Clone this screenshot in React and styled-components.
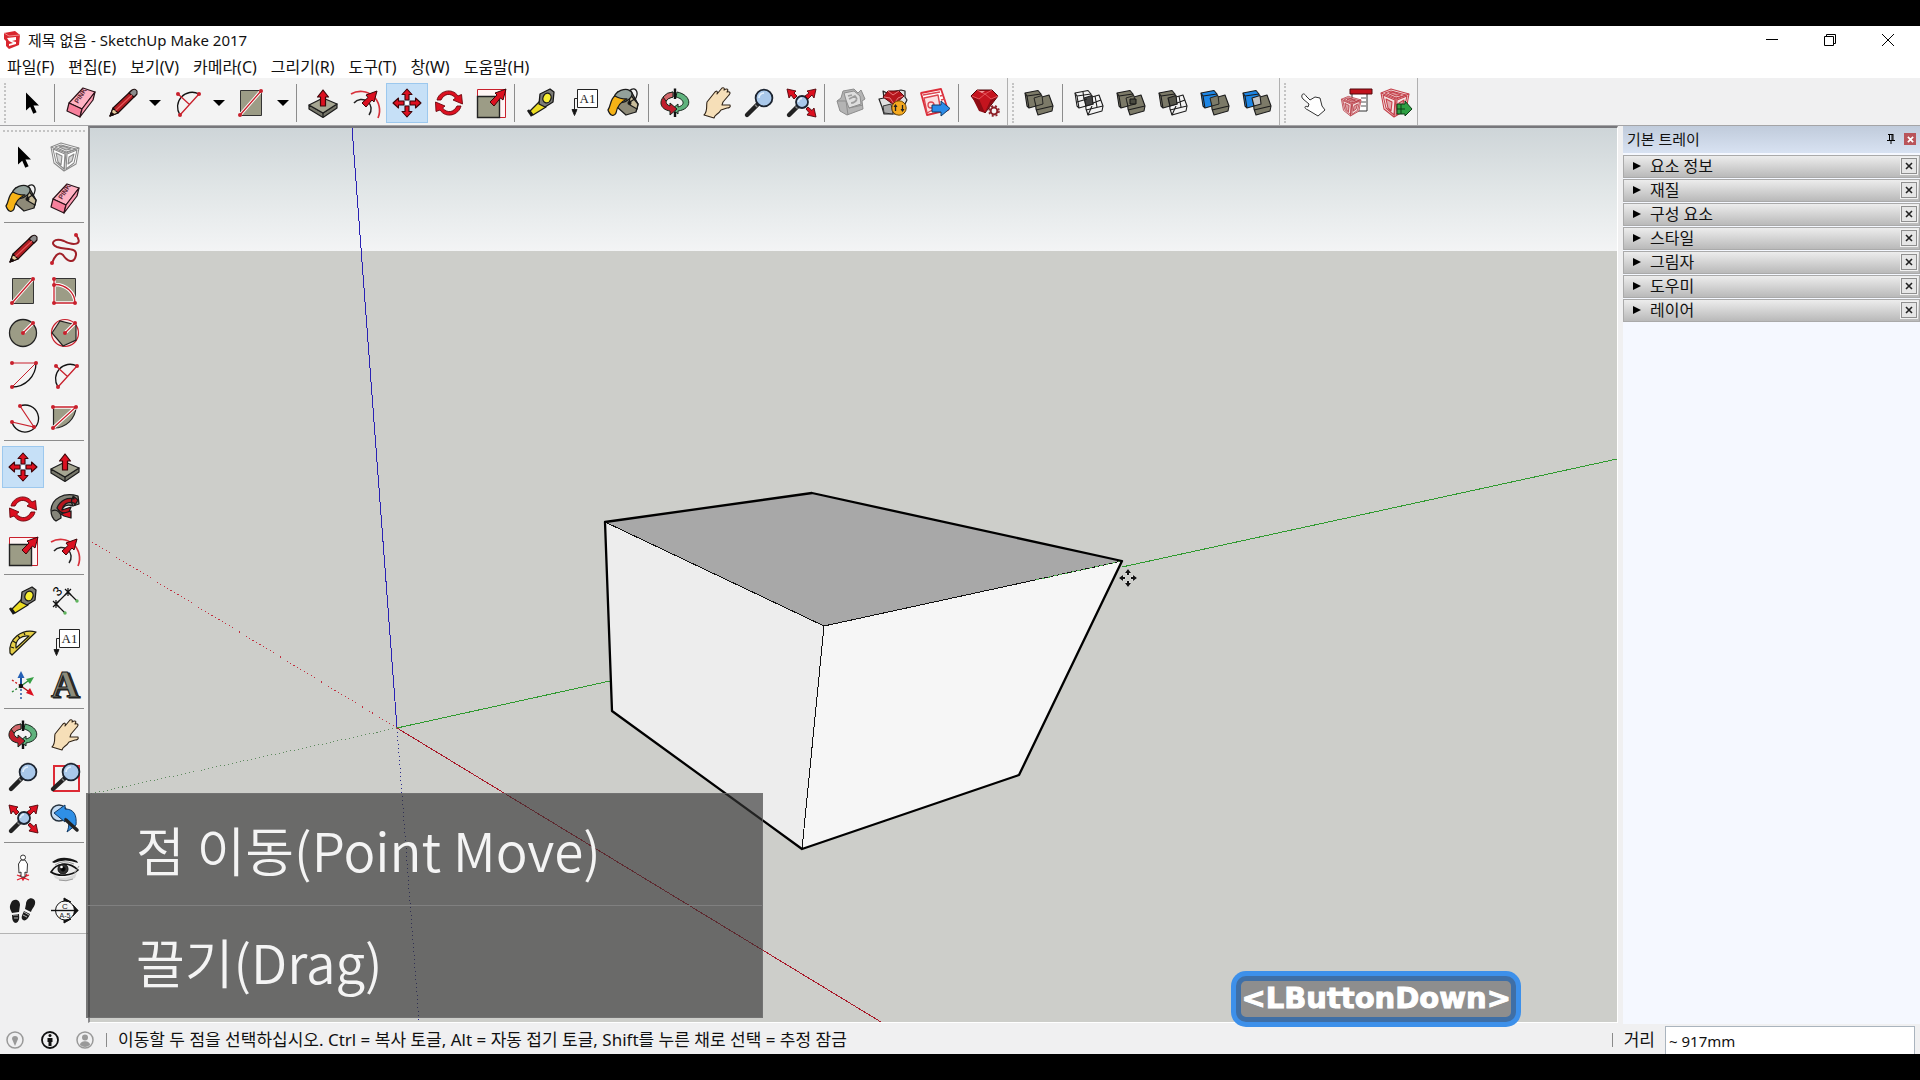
import React from "react"
import styled, { createGlobalStyle, css } from "styled-components"

const GlobalStyle = createGlobalStyle`
  * {
    box-sizing: border-box;
  }
  body {
    margin: 0;
    background: #000;
    color: #111;
    font-family: "Noto Sans", "Noto Sans CJK KR", sans-serif;
    font-size: 15px;
    line-height: 20px;
  }
  button,
  input {
    font: inherit;
    color: inherit;
  }
  button {
    border: 0;
    padding: 0;
    background: none;
  }
`

const RED = "#dc1020"
const LINE = "#c8202c"
const FACE = "#9c9c86"

/* ---------- shared icon parts ---------- */

const Dot = ({ x, y }) => <circle cx={x} cy={y} r="2" fill={LINE} />

const Cased = ({ d }) => (
  <g fill="none">
    <path d={d} stroke="#fff" strokeWidth="3.4" />
    <path d={d} stroke={LINE} strokeWidth="1.3" />
  </g>
)

const Lens = ({ x = 21, y = 11, r = 8.4 }) => (
  <g>
    <path d={`M4 28L${x - r * 0.7} ${y + r * 0.7}`} stroke="#222" strokeWidth="4.4" strokeLinecap="round" />
    <path d={`M${x - r} ${y + r}l1-1`} stroke="#888" strokeWidth="3" />
    <circle cx={x} cy={y} r={r} fill="#a9c8ea" stroke="#1c2430" strokeWidth="1.8" />
    <path d={`M${x - r * 0.6} ${y}a${r * 0.6} ${r * 0.6} 0 0 1 ${r * 0.6} ${-r * 0.6}`} stroke="#e3effb" strokeWidth="1.6" fill="none" />
  </g>
)

const BoxCage = ({ color, fill = "#fff" }) => (
  <g stroke={color} fill={fill} strokeWidth="1.1" strokeLinejoin="round">
    <path d="M2 6L12 2 30 7 27 23 15 30 5 22z" />
    <path d="M4 8L16 13 15 28 7 21zM18 13L28 9 25 22 17 28zM6 6L12 4 27 8 17 11z" />
    <path d="M2 6L17 12 30 7M17 12L15 30" fill="none" />
    <path d="M7 12L13 15 12 24 9 21zM20 16L25 13 23 20 19 23z" fill={color} fillOpacity="0.35" />
    <path d="M10 6L14 5 22 8 17 9z" fill={color} fillOpacity="0.5" />
  </g>
)

const CLEAR = "none"
const BLUE = "#1d86e6"
const OLIVE = "#7c7a68"

// Two overlapping blocks; each variant colours the left, shared and right part
const Solids = ({ left, mid, right }) => (
  <g stroke="#1c1c1c" strokeWidth="1.1" strokeLinejoin="round">
    <path d="M2 6L15 3.5 18 7 20 17 6 21 4 19z" fill={left} />
    <path d="M12 12L26 8 30 19 29 24 15 28 13 22z" fill={right} />
    <path d="M11 11L19 8.5 20 17 13 19z" fill={mid} strokeWidth={mid === OLIVE ? 0.9 : 1.1} />
    <path d="M2 6L4 9 6 21M4 9L18 7M13 23L30 19" fill="none" />
    {left === CLEAR && <path d="M4 15L14 12M10 5L11 12" fill="none" />}
    {right === CLEAR && <path d="M22 9L24 20M20 16L28 13M15 28L19 19" fill="none" />}
  </g>
)

const ICONS = {
  select: <path d="M11 5.5V23.5L15.2 19.7 18.3 26.8 21.6 25.3 18.5 18.6H24z" fill="#000" />,
  component: <BoxCage color="#8a8a8a" />,
  paint: (
    <g stroke="#1a1a1a" strokeWidth="1.3" strokeLinejoin="round">
      <path d="M9 5L22 4 29 17 27 25 17 28 8 20z" fill="#8e8a78" />
      <path d="M20 6L29 17 28 22 21 18z" fill="#c9bd9b" />
      <ellipse cx="14" cy="9" rx="9.5" ry="6" transform="rotate(-22 14 9)" fill="#93a19b" />
      <path d="M20 4C26-1 30 4 27 11L21 15" fill="none" />
      <path d="M6 9C1 12 2 19-1 23 1 29 5 30 7 26 8 20 11 15 18 12 12 12 9 11 6 9z" fill="#f6b316" />
      <circle cx="20.5" cy="16" r="1.4" fill="#111" />
    </g>
  ),
  eraser: (
    <g stroke="#2a1218" strokeWidth="1.2" strokeLinejoin="round">
      <path d="M18 1L30 5 17 22 4 16z" fill="#ffb3c4" />
      <path d="M4 16L17 22 15 30 2 24z" fill="#f7809c" />
      <path d="M17 22L30 5 28 13 15 30z" fill="#ff9db4" />
      <text x="0" y="0" transform="translate(13 17) rotate(-57)" fontSize="7" fontWeight="700" fill="#5a1f30" stroke="none" fontFamily="Liberation Sans, sans-serif">PINK</text>
    </g>
  ),
  pencil: (
    <g stroke="#1c0c0c" strokeWidth="1.1" strokeLinejoin="round">
      <path d="M3 29L6 21 24 4 29 8 11 26z" fill="#b11d22" />
      <path d="M3 29L6 21 11 26z" fill="#e8cfa0" />
      <path d="M3 29L4.5 25.5 7 27.5z" fill="#111" />
      <path d="M22 6L25 3Q28 1 30 4L30 7 27 10z" fill="#8c8c8c" />
      <path d="M8.5 23.5L25 8" stroke="#e8585a" />
    </g>
  ),
  freehand: (
    <g fill="none">
      <path d="M27 2C35 12 24 13 15 8 5 4 0 11 8 14 17 17 28 14 27 22 25 32 18 28 14 22 9 17 5 25 3 30" stroke="#a02028" strokeWidth="2" />
      <Dot x={27} y={2} />
      <Dot x={3} y={30} />
    </g>
  ),
  rectangle: (
    <g>
      <path d="M5.5 3.5H26.5V28.5H5.5z" fill={FACE} stroke="#333" />
      <Cased d="M5 28L26 4" />
      <Dot x={5} y={28} />
      <Dot x={26} y={4} />
    </g>
  ),
  rotatedRect: (
    <g>
      <path d="M5.5 3.5H26.5V28.5H5.5z" fill={FACE} stroke="#333" />
      <Cased d="M5 4V28H26C26 18 17 9 5 9.5" />
      <Dot x={5} y={4} />
      <Dot x={5} y={10} />
      <Dot x={5} y={28} />
      <Dot x={26} y={28} />
    </g>
  ),
  circle: (
    <g>
      <circle cx="16" cy="16" r="13.5" fill={FACE} stroke="#222" strokeWidth="1.3" />
      <Cased d="M16 16L26 6" />
      <Dot x={16} y={16} />
      <Dot x={26} y={6} />
    </g>
  ),
  polygon: (
    <g>
      <circle cx="16" cy="16" r="13.5" fill="#fbe9e9" stroke={LINE} strokeWidth="1.2" />
      <path d="M3 16L11 4 27 8 27 23 14 29z" fill={FACE} stroke="#222" strokeWidth="1.2" />
      <Cased d="M16 16L26 6" />
      <Dot x={16} y={16} />
      <Dot x={26} y={6} />
    </g>
  ),
  arc: (
    <g fill="none">
      <path d="M29 4A24 24 0 0 1 5 28" stroke="#111" strokeWidth="1.3" />
      <path d="M5 4H29L5 28" stroke={LINE} />
      <Dot x={5} y={4} />
      <Dot x={29} y={4} />
      <Dot x={5} y={28} />
    </g>
  ),
  twoPointArc: (
    <g fill="none">
      <path d="M9 28A14.6 14.6 0 0 1 28 7" stroke="#111" strokeWidth="1.3" />
      <path d="M9 28L28 7M7 7L18.5 17.5" stroke={LINE} strokeWidth="1.3" />
      <Dot x={7} y={7} />
      <Dot x={28} y={7} />
      <Dot x={9} y={28} />
    </g>
  ),
  threePointArc: (
    <g fill="none">
      <path d="M13 5A13.5 13.5 0 1 1 5 21" stroke="#111" strokeWidth="1.3" />
      <path d="M13 5L27 26 5 21" stroke={LINE} strokeWidth="1.2" />
      <Dot x={13} y={5} />
      <Dot x={5} y={21} />
      <Dot x={27} y={26} />
    </g>
  ),
  pie: (
    <g>
      <path d="M4.5 6H27A22 22 0 0 1 4.5 27z" fill={FACE} stroke="#222" strokeWidth="1.2" />
      <Cased d="M4 6H27L4 27" />
      <Dot x={4} y={6} />
      <Dot x={27} y={6} />
      <Dot x={4} y={27} />
    </g>
  ),
  move: (
    <g fill={RED} stroke="#3c0508" strokeWidth="1.1" strokeLinejoin="round">
      {[0, 90, 180, 270].map((a) => (
        <path key={a} transform={`rotate(${a} 16 16)`} d="M16 2L21 7.5H18V13H14V7.5H11z" />
      ))}
      <circle cx="16" cy="16" r="2" fill="#fff" stroke="none" />
    </g>
  ),
  pushPull: (
    <g stroke="#1c1c1c" strokeWidth="1.2" strokeLinejoin="round">
      <path d="M2 18L16 26 30 17V21L16 30.5 2 22z" fill="#77776a" />
      <path d="M2 18L16 11 30 17 16 26z" fill="#a6a692" />
      <path d="M16 26V30" />
      <path d="M16 3L21.5 10H18.5V19H13.5V10H10.5z" fill={RED} stroke="#3c0508" />
    </g>
  ),
  rotate: (
    <g fill={RED} stroke="#6c060c" strokeWidth="0.9" strokeLinejoin="round">
      <path d="M4 13C6 4 19 0 25 9L28.5 7.5 29.5 17 20 13 22.5 11C17 5 11 7 8 13z" />
      <path d="M28 19C26 28 13 32 7 23L3 24.5 2.5 15 12 19 9.5 21C15 27 21 25 24 19z" />
    </g>
  ),
  followMe: (
    <g stroke="#1b1b1b" strokeWidth="1.3" strokeLinejoin="round">
      <path d="M2 17C3 5 15-1 29 3L30 11 24 13C15 10 11 16 12 25L7 28Q2 25 2 17z" fill="#85857a" />
      <path d="M8 15C11 7 19 4 25 6L24 3 29 7 26 12 25 10C18 8 14 12 13 17L22 14 20 19Q12 22 8 15z" fill="#b5161e" />
      <path d="M12 21L22 18V25L15 23z" fill={RED} />
      <path d="M3 18Q8 15 12 22M24 4Q21 8 24 13" fill="none" />
    </g>
  ),
  scale: (
    <g>
      <path d="M2.5 2.5H30.5V30.5H2.5z" fill="#fff5f5" stroke={LINE} />
      <path d="M2.5 9.5H24.5V30.5H2.5z" fill={FACE} stroke="#222" strokeWidth="1.4" />
      <path d="M15 15L22 8 20 6 31 2 28 13 25.5 11 19 19z" fill={RED} stroke="#3c0508" />
    </g>
  ),
  offset: (
    <g fill="none">
      <path d="M2 7A19 19 0 0 1 29 31" stroke="#d8303a" strokeWidth="1.7" />
      <path d="M5 16A9.5 9.5 0 0 1 20 28" stroke="#222" strokeWidth="1.5" />
      <path d="M13 16L19 10.5 17 8 28 4 25 15 23 13 17 20z" fill={RED} stroke="#3c0508" />
    </g>
  ),
  tape: (
    <g stroke="#181818" strokeWidth="1.3" strokeLinejoin="round">
      <path d="M15 14L21 20 8 28 5 24z" fill="#ecdc22" />
      <path d="M3 23L7 29" strokeWidth="2.5" />
      <path d="M15 7L25 2 29 5 28 15 20 20 14 17z" fill="#7b7b76" />
      <ellipse cx="22" cy="11" rx="4" ry="5" transform="rotate(20 22 11)" fill="#f8ee32" />
    </g>
  ),
  dimension: (
    <g stroke="#111" strokeWidth="1.2">
      <path d="M7 19L19 7M7 19L16 28M19 7L28 16" />
      <path d="M4 16L10 22M4 22L10 16M7 15V23M16 4L22 10M16 10L22 4M19 3V11" />
      <text x="0" y="0" transform="translate(9 12) rotate(-45)" stroke="none" fontSize="13" fontFamily="Liberation Sans, sans-serif">3</text>
      <circle cx="28" cy="16" r="1.7" fill="#5fb45c" stroke="none" />
      <circle cx="16" cy="28" r="1.7" fill="#5fb45c" stroke="none" />
    </g>
  ),
  protractor: (
    <g stroke="#1c1c10" strokeWidth="1.2" strokeLinejoin="round">
      <path d="M5 28L29 5C15 1 1 12 3 26z" fill="#e6cf47" />
      <path d="M9 21L22 9C14 8 8 13 9 21z" fill="#f5f4ee" />
      <path d="M4 20l3 1M6 14l3 2M11 9l2 2M17 6l1 2" />
    </g>
  ),
  text: (
    <g stroke="#222" fill="none">
      <path d="M10.5 2.5H30.5V20.5H10.5z" fill="#fff" />
      <path d="M10 11.5H7.5V23" />
      <path d="M5 22.5H10L7.5 28.5z" fill="#111" />
      <text x="20.5" y="15.5" textAnchor="middle" stroke="none" fill="#222" fontSize="13" fontFamily="Liberation Serif, serif">A1</text>
    </g>
  ),
  axes: (
    <g fill="none" strokeWidth="1.4">
      <path d="M14 17V8" stroke="#1c4f9c" strokeWidth="2" />
      <path d="M10.5 9L14 2 17.5 9z" fill="#2460b5" />
      <path d="M14 17L21 12" stroke="#2f8a3b" />
      <path d="M19 10L27 8 23 15z" fill="#37a045" />
      <path d="M14 17L21 22" stroke="#a11" />
      <path d="M19 24L23 19 27 27z" fill={RED} />
      <path d="M14 20V30" stroke="#1c4f9c" strokeDasharray="2 2" />
      <path d="M5 11L14 17" stroke="#c22" strokeDasharray="2 2" />
      <path d="M5 23L14 17" stroke="#2f8a3b" strokeDasharray="2 2" />
      <circle cx="14" cy="17" r="2.2" fill="#111" />
    </g>
  ),
  text3d: (
    <g fontFamily="Liberation Serif, serif" fontSize="38" fontWeight="700" stroke="#1c1c1c" strokeWidth="1.1">
      <text x="4" y="29" fill="#3d3d37">A</text>
      <text x="2" y="28" fill="#8d8d7c">A</text>
    </g>
  ),
  orbit: (
    <g stroke="#15251b" strokeWidth="1" strokeLinejoin="round">
      <path d="M18 5C33 8 34 22 19 24L19 27 13 22 19 17V20C27 18 25 12 17 10z" fill="#5fb27d" />
      <path d="M14 5C-1 8-2 22 11 24V28L18 22 11 16V19C5 17 6 11 14 10z" fill="#c01d2c" />
      <path d="M4 10Q8 5 14 5V10Q9 11 7 14z" fill="#d2686c" />
      <path d="M16 1.5V12M16 25V30" stroke="#111" strokeWidth="2.4" />
    </g>
  ),
  pan: (
    <path
      d="M3 28C7 24 5 20 6 15L14 5C16 3 17 5 16 7L21 1C23 0 24 2 23 3 26 1 28 2 26 5 29 4 30 6 28 8L22 15 21 18 29 18C30 20 28 21 26 21L20 23C17 28 14 27 13 31z"
      fill="#f6dfb8"
      stroke="#302418"
      strokeWidth="1.1"
      strokeLinejoin="round"
    />
  ),
  zoom: <Lens />,
  zoomWindow: (
    <g>
      <path d="M5 5H30V30H5z" fill="none" stroke="#dd2a35" strokeWidth="2" />
      <Lens x={22} />
    </g>
  ),
  zoomExtents: (
    <g>
      <Lens x={17} y={15} r={6} />
      <g fill={RED} stroke="#50060a" strokeWidth="0.9">
        <path d="M2 2L11 4 9 6 12 9 9 12 6 8 4 11z" />
        <path d="M31 2L22 4 24 6 20 9 23 12 27 8 29 11z" />
        <path d="M31 30L22 28 24 25.5 21 22 23 20 27 23.5 29 21z" />
      </g>
    </g>
  ),
  previous: (
    <g>
      <circle cx="10" cy="10" r="8" fill="#c5dcf3" stroke="#26323e" strokeWidth="1.5" />
      <path d="M5 10L16 2V6C25 6 28 12 27 22L18 29C21 22 20 17 16 15V19z" fill="#2f8fe6" stroke="#123a66" />
      <path d="M17 17L28 27" stroke="#222" strokeWidth="3.5" strokeLinecap="round" />
    </g>
  ),
  camera: (
    <g fill="#fff" stroke="#333">
      <path d="M10 27L22 22M10 22L22 27M13 22L16 27 20 21" stroke="#e02030" fill="none" strokeWidth="1.3" />
      <path d="M14 7H18L20.5 11 20 20 18 19V24H14V19L12 20 11.5 11z" />
      <circle cx="16" cy="4.5" r="2.5" />
    </g>
  ),
  look: (
    <g fill="none" stroke="#111">
      <path d="M4 21Q13 29 28 20L26 25Q15 31 6 25z" fill="#d9d9d9" stroke="none" />
      <path d="M3 9Q13 1 28 8L29 10Q16 5 5 10z" fill="#161616" stroke="none" />
      <path d="M2 19C7 10 20 8 29 17 23 23 9 24 2 19z" fill="#e9e9e9" strokeWidth="1.6" />
      <circle cx="14" cy="16" r="5" fill="#333" />
      <circle cx="14" cy="16" r="2.2" fill="#000" />
      <circle cx="12.5" cy="14" r="1.3" fill="#fff" stroke="none" />
      <path d="M10 27Q17 29 24 26M25 21L30 13M6 12Q14 6 25 11" stroke="#9a9a9a" />
    </g>
  ),
  walk: (
    <g fill="#1b1b1b">
      <path d="M4 8C6 3 13 4 13 10L12 17 5 18C3 14 2 12 4 8zM5 20L12 19Q13 27 9 28 5 28 5 20z" />
      <path d="M19 9C19 3 26 1 28 6 29 11 25 13 24 17L18 14zM17 16L23 19C21 25 17 27 15 24 14 21 16 19 17 16z" />
      <path d="M6 20H11M7 23H11M17 17L22 20M16 20L20 22" stroke="#ddd" strokeWidth="0.8" />
    </g>
  ),
  section: (
    <g stroke="#111" fill="none">
      <path d="M15 3L22 7H15zM15 28L22 24H15z" fill="#111" />
      <path d="M24 10L29 15.5 24 21z" fill="#111" />
      <circle cx="16" cy="15.5" r="9.5" fill="#f7f7f7" />
      <path d="M2 15.5H29" strokeWidth="1.4" />
      <g fill="#222" stroke="none" textAnchor="middle" fontFamily="Liberation Sans, sans-serif">
        <text x="16" y="14" fontSize="8">C</text>
        <text x="16" y="22.5" fontSize="7">A-5</text>
      </g>
    </g>
  ),
  getModels: (
    <g stroke="#8d8d8d" fill="#b4b4b4" strokeLinejoin="round">
      <path d="M6 11L8 4 19 2 23 6 26 3 30 12 27 14 28 22 12 28 5 24 2 14z" />
      <path d="M9 6L19 4 25 9 26 17 14 21 11 13z" fill="#dedede" />
      <path d="M2 14L11 14 13 28M14 21L28 18" fill="none" />
      <path d="M13 9L17 8M14 12L20 9 22 12M16 16Q20 16 22 12" fill="none" stroke="#9c9c9c" strokeWidth="1.7" />
    </g>
  ),
  extensions: (
    <g strokeLinejoin="round">
      <path d="M2 12L7 11 6 4 10 6 24 3 28 4 28 10 30 13 27 19 22 27 7 27 5 20z" fill="#e0e0e0" stroke="#222" strokeWidth="1.2" />
      <path d="M6 19L14 17 16 27 7 26z" fill="#a8a8a8" stroke="#333" />
      <path d="M6 10L11 4H22L27 9 17 18z" fill="#b5151c" stroke="#5a0a0e" />
      <path d="M7 10L13 11 17 17 21 11 26 9M11 4L16 8 22 4" fill="none" stroke="#e8777a" />
      <circle cx="22" cy="21" r="7.2" fill="#f4a91f" stroke="#6b4400" />
      <path d="M18.5 18v6M25.5 18v6" fill="none" stroke="#222" strokeWidth="1.3" />
      <path d="M16.5 20L18.5 17 20.5 20zM23.5 22L25.5 25 27.5 22z" fill="#222" />
    </g>
  ),
  layout: (
    <g strokeLinejoin="round">
      <path d="M2 6L22 2 29 23 8 28z" fill="#fff" stroke="#dc2c38" strokeWidth="1.8" />
      <path d="M5 11L19 8 21 19 8 26z" fill="#fbe1e2" stroke="#dc4650" strokeWidth="1.4" />
      <path d="M4 8L21 5M21 9L25 8M22 13L26 12" fill="none" stroke="#dc4650" strokeWidth="1.4" />
      <circle cx="12" cy="18" r="3" fill="none" stroke="#dc4650" strokeWidth="1.3" />
      <path d="M13 18H22V14L31 21.5 22 29V25H13z" fill="#2b8ce8" stroke="#123a66" />
    </g>
  ),
  ruby: (
    <g strokeLinejoin="round">
      <path d="M2 9L8 3H23L29 9 16 26z" fill="#c4141e" stroke="#4f070b" />
      <path d="M3 10L10 12 16 26 10 24zM22 12L28 10 16 25z" fill="#8e0c14" stroke="none" />
      <path d="M3 9L10 12 16 7 22 12 29 9M8 3L16 7 23 3" fill="none" stroke="#e85a60" strokeWidth="0.9" />
      <path d="M10 4H16L13 6z" fill="#e99" />
      <circle cx="25" cy="24" r="3.4" fill="#f3f3f3" stroke="#8c2028" strokeWidth="2" />
      <circle cx="25" cy="24" r="5" fill="none" stroke="#8c2028" strokeWidth="1.5" strokeDasharray="2 2" />
    </g>
  ),
  shell: <Solids left={OLIVE} mid={OLIVE} right={OLIVE} />,
  intersect: <Solids left={CLEAR} mid="#444" right={CLEAR} />,
  union: (
    <g>
      <Solids left={OLIVE} mid={OLIVE} right={OLIVE} />
      <path d="M15 12H21V17H15z" fill="#4a4a40" stroke="#111" />
    </g>
  ),
  subtract: <Solids left={OLIVE} mid="#55554a" right={CLEAR} />,
  trim: <Solids left={BLUE} mid={OLIVE} right={OLIVE} />,
  split: <Solids left={BLUE} mid="#c4c4c4" right={OLIVE} />,
  finger: (
    <path
      d="M5 7C6 5 8 6 9 8L13 12 18 9 23 10 25 18 28 22 21 28 11 22C6 20 8 17 11 19L12 16 6 11Q4 9 5 7z"
      transform="translate(2 1)"
      fill="#fff"
      stroke="#333"
      strokeLinejoin="round"
    />
  ),
  options: (
    <g>
      <path d="M15 4H30V24H15z" fill="#fff" stroke="#333" />
      <path d="M13 2H35V7H13z" fill="#c1121c" stroke="#50080c" />
      <path d="M24 11H29M24 15H29M24 19H29" stroke="#555" />
      <g transform="translate(3 8) scale(0.7)">
        <BoxCage color="#b4303a" fill="#f3dede" />
      </g>
    </g>
  ),
  attributes: (
    <g>
      <BoxCage color="#c4404a" fill="#f5e4e4" />
      <path d="M18 17H26V14L33 22 26 29V27H18z" fill="#2ea043" stroke="#0c3d16" />
      <path d="M18 22H26M22 17V27" stroke="#0c3d16" />
    </g>
  ),
}

const Icon = ({ name }) => (
  <svg width="32" height="32" viewBox="0 0 32 32" overflow="visible" aria-hidden="true">
    {ICONS[name]}
  </svg>
)

/* ---------- window frame ---------- */

const Screen = styled.div`
  display: flex;
  flex-direction: column;
  min-height: 100vh;
  padding: 26px 0;
  background: #000;
`

const Window = styled.div`
  display: flex;
  flex: 1;
  flex-direction: column;
  background: #f0f0f1;
`

const TitleBar = styled.header`
  display: flex;
  align-items: center;
  height: 28px;
  padding: 0 3px;
  background: #fff;
`

const Title = styled.h1`
  flex: 1;
  margin: 0 0 0 7px;
  font-size: 15px;
  font-weight: 400;
`

const WindowButton = styled.button`
  display: grid;
  place-items: center;
  width: 58px;
  height: 28px;
`

const MenuBar = styled.nav`
  display: flex;
  gap: 14px;
  height: 24px;
  padding: 3px 7px 1px;
  background: #fff;
`

const MenuItem = styled.button`
  font-size: 16px;
  line-height: 20px;
  white-space: nowrap;
`

/* ---------- toolbars ---------- */

const ToolbarRow = styled.div`
  display: flex;
  height: 48px;
  border-bottom: 1px solid #a4a4a6;
`

const Toolbar = styled.div`
  display: flex;
  align-items: center;
  padding: 2px 1px 0 4px;
  background: #f3f3f3;
  border-right: 1px solid #b0b0b0;
`

const Grip = styled.span`
  ${(props) =>
    props.$wide
      ? css`
          grid-column: 1 / -1;
          height: 6px;
          margin: 3px 1px 0;
          border-top: 2px dotted #c4c4c4;
        `
      : css`
          width: 6px;
          height: 40px;
          border-left: 2px dotted #c4c4c4;
        `}
`

const Divider = styled.span`
  ${(props) =>
    props.$wide
      ? css`
          grid-column: 1 / -1;
          height: 8px;
          padding: 2px;
          &::before {
            content: "";
            display: block;
            border-top: 1px solid #8c8c8c;
          }
        `
      : css`
          width: 8px;
          height: 38px;
          padding-left: 2px;
          &::before {
            content: "";
            display: block;
            height: 38px;
            border-left: 1px solid #8c8c8c;
          }
        `}
`

const ToolButton = styled.button`
  display: grid;
  place-items: center;
  width: 42px;
  height: ${(props) => (props.$tall ? 42 : 40)}px;
  border: 1px solid ${(props) => (props.$active ? "#9cc8ee" : "transparent")};
  background: ${(props) => (props.$active ? "#c6e0f7" : "none")};
`

const DropButton = styled.button`
  width: 22px;
  height: 40px;
  display: grid;
  place-items: center;
  &::before {
    content: "";
    border: 6px solid transparent;
    border-top-color: #000;
    border-bottom: 0;
  }
`

const Workspace = styled.div`
  display: flex;
  flex: 1;
`

const SideColumn = styled.aside`
  width: 88px;
`

const SideToolbar = styled.div`
  display: grid;
  grid-template-columns: 42px 42px;
  padding: 1px 2px;
  background: #f3f3f3;
  border-bottom: 1px solid #b4b4b4;
`

/* ---------- model view ---------- */

const Viewport = styled.main`
  position: relative;
  flex: 1;
  margin-bottom: 1px;
  border: 1px solid #fff;
  border-top: 2px solid #77777b;
  border-left: 2px solid #8a8a8c;
  background: #cdceca;
`

const Scene = styled.svg`
  position: absolute;
  inset: 0;
  width: 100%;
  height: 100%;
`

const Caption = styled.div`
  position: absolute;
  left: -4px;
  bottom: 4px;
  width: 677px;
  border: 1px solid rgba(120, 120, 120, 0.6);
  background: rgba(52, 52, 52, 0.65);
`

const CaptionLine = styled.p`
  margin: 0;
  padding: 16px 49px;
  font-family: "Noto Sans CJK KR", sans-serif;
  font-size: 53px;
  font-weight: 350;
  line-height: 79px;
  color: #f4f4f4;
  white-space: nowrap;
  & + & {
    border-top: 1px solid #808080;
  }
`

const KeyBadge = styled.kbd`
  position: absolute;
  right: 96px;
  bottom: -5px;
  padding: 0 0 1px;
  border: 5px solid #3f6fa6;
  border-radius: 10px;
  box-shadow: 0 0 0 5px #3d90ea;
  margin: 5px;
  background: #8e8e8e;
  color: #fff;
  font-family: "DejaVu Sans", sans-serif;
  font-size: 29px;
  font-weight: 700;
  line-height: 35px;
  -webkit-text-stroke: 1px #fff;
`

/* ---------- tray ---------- */

const Tray = styled.aside`
  width: 297px;
  margin-left: 5px;
  background: #f5f8ff;
`

const TrayHeader = styled.div`
  display: flex;
  align-items: center;
  height: 27px;
  margin-bottom: 2px;
  padding: 0 4px 1px;
  background: linear-gradient(#c0cbdb, #d8e2f2);
`

const TrayTitle = styled.h2`
  flex: 1;
  margin: 0;
  font-size: 15px;
  font-weight: 400;
`

const PinButton = styled.button`
  display: grid;
  place-items: center;
  width: 14px;
  height: 14px;
  margin-right: 6px;
`

const TrayClose = styled.button`
  display: grid;
  place-items: center;
  width: 12px;
  height: 12px;
  background: #b9545a;
`

const Panel = styled.section`
  display: flex;
  align-items: center;
  height: 23px;
  margin-bottom: 1px;
  padding: 0 2px 1px 0;
  border: 1px solid #aaa;
  background: linear-gradient(#ededed, #b9b9b9);
`

const PanelToggle = styled.button`
  display: flex;
  flex: 1;
  align-items: center;
  gap: 9px;
  padding-left: 9px;
  font-size: 16px;
  text-align: left;
  &::before {
    content: "";
    border: 4px solid transparent;
    border-left: 8px solid #000;
    border-right: 0;
  }
`

const PanelClose = styled.button`
  display: grid;
  place-items: center;
  width: 16px;
  height: 16px;
  border: 1px solid #8f8f8f;
  outline: 1px solid #f2f2f2;
  background: #e6e6e6;
`

/* ---------- status bar ---------- */

const StatusBar = styled.footer`
  display: flex;
  align-items: center;
  height: 30px;
  padding: 2px 5px 0 6px;
`

const StatusIcons = styled.div`
  display: flex;
  gap: 17px;
  margin-right: 12px;
`

const StatusButton = styled.button`
  display: block;
  width: 18px;
  height: 18px;
  color: ${(props) => (props.$on ? "#111" : "#999")};
  svg {
    display: block;
  }
`

const StatusText = styled.p`
  flex: 1;
  margin: 0;
  padding-left: 11px;
  border-left: 1px solid #8a8a8a;
  font-size: 17px;
  line-height: 14px;
  white-space: nowrap;
`

const MeasureLabel = styled.label`
  margin-right: 10px;
  padding-left: 11px;
  border-left: 1px solid #8a8a8a;
  font-size: 17px;
  line-height: 14px;
`

const MeasureInput = styled.input`
  width: 250px;
  height: 28px;
  padding: 0 3px;
  border: 1px solid #aab4be;
  border-bottom: 0;
  background: #fff;
`

/* ---------- content ---------- */

const menus = ["파일(F)", "편집(E)", "보기(V)", "카메라(C)", "그리기(R)", "도구(T)", "창(W)", "도움말(H)"]

// "|" is a divider, "v" a drop-down arrow
const toolbars = [
  [
    "select", "|",
    "eraser", "pencil", "v", "twoPointArc", "v", "rectangle", "v", "|",
    "pushPull", "offset", "move", "rotate", "scale", "|",
    "tape", "text", "paint", "|",
    "orbit", "pan", "zoom", "zoomExtents", "|",
    "getModels", "extensions", "layout", "|",
    "ruby",
  ],
  ["shell", "|", "intersect", "union", "subtract", "trim", "split"],
  ["finger", "options", "attributes"],
]

const sideTools = [
  "select", "component", "paint", "eraser", "|",
  "pencil", "freehand", "rectangle", "rotatedRect", "circle", "polygon",
  "arc", "twoPointArc", "threePointArc", "pie", "|",
  "move", "pushPull", "rotate", "followMe", "scale", "offset", "|",
  "tape", "dimension", "protractor", "text", "axes", "text3d", "|",
  "orbit", "pan", "zoom", "zoomWindow", "zoomExtents", "previous", "|",
  "camera", "look", "walk", "section",
]

const panels = ["요소 정보", "재질", "구성 요소", "스타일", "그림자", "도우미", "레이어"]

const Tools = ({ items, side }) =>
  items.map((item, idx) => {
    if (item === "|") return <Divider key={idx} $wide={side} />
    if (item === "v") return <DropButton key={idx} aria-label={`${items[idx - 1]} options`} />
    return (
      <ToolButton key={idx} aria-label={item} $tall={side} $active={item === "move"}>
        <Icon name={item} />
      </ToolButton>
    )
  })

const Cross = ({ size, color = "#222", width = 2 }) => (
  <svg width={size} height={size} viewBox="0 0 8 8" aria-hidden="true">
    <path d="M1 1L7 7M7 1L1 7" stroke={color} strokeWidth={width} />
  </svg>
)

const Model = () => (
  <Scene viewBox="90 128 1527 894" preserveAspectRatio="xMinYMin slice" role="img" aria-label="Model">
    <defs>
      <linearGradient id="sky" x1="0" y1="0" x2="0" y2="1">
        <stop offset="0" stopColor="#ced5d8" />
        <stop offset="0.5" stopColor="#e1e6e7" />
        <stop offset="1" stopColor="#f3f4f5" />
      </linearGradient>
    </defs>
    <path d="M90 128H1617V251H90z" fill="url(#sky)" />
    <g fill="none" shapeRendering="crispEdges">
      <path d="M397 728L352 128" stroke="#2a22b4" />
      <path d="M397 728L419 1022" stroke="#2a2a8c" strokeDasharray="1 3" />
      <path d="M397 728L610 681M1122 567L1617 459" stroke="#2f9a2f" />
      <path d="M397 728L90 794" stroke="#5f8a5f" strokeDasharray="1 3" />
      <path d="M397 728L881 1022" stroke="#a81828" />
      <path d="M397 728L90 541" stroke="#c03040" strokeDasharray="1 3" />
    </g>
    <g strokeLinejoin="round">
      <path d="M605 522L812 493 1122 561 824 626z" fill="#a8a8a8" />
      <path d="M605 522L824 626 802 849 612 711z" fill="#ededed" />
      <path d="M824 626L1122 561 1019 775 802 849z" fill="#f6f6f6" />
      <path d="M605 522L824 626 1122 561M824 626L802 849" fill="none" stroke="#111" shapeRendering="crispEdges" />
      <path d="M1036 580L1122 561" stroke="#4fae4f" strokeDasharray="3 3" shapeRendering="crispEdges" />
      <path d="M605 522L812 493 1122 561 1019 775 802 849 612 711z" fill="none" stroke="#000" strokeWidth="2.3" />
    </g>
    <g fill="#111" stroke="#e4e4e4" strokeWidth="1" paintOrder="stroke">
      {[0, 90, 180, 270].map((a) => (
        <path key={a} transform={`rotate(${a} 1128 578)`} d="M1128 569L1131 573H1129V575H1127V573H1125z" />
      ))}
    </g>
  </Scene>
)

const App = () => (
  <Screen>
    <GlobalStyle />
    <Window>
      <TitleBar>
        <svg width="18" height="20" viewBox="0 0 18 20" aria-hidden="true">
          <path d="M1 3L12 1 17 5 16 15 6 19 3 16 3 11 1 9z" fill="#d9262e" />
          <path d="M1 3L6 6 17 5" stroke="#f08a8a" fill="none" />
          <path d="M4 8L13 7V10L9 11 13 12V14L6 16V14L10 13 6 11z" fill="#fff" />
        </svg>
        <Title>제목 없음 - SketchUp Make 2017</Title>
        <WindowButton aria-label="Minimize">
          <svg width="12" height="12">
            <path d="M0 5.5H12" stroke="#000" />
          </svg>
        </WindowButton>
        <WindowButton aria-label="Restore">
          <svg width="12" height="12" fill="none" stroke="#000">
            <path d="M0.5 2.5H9.5V11.5H0.5zM2.5 2V0.5H11.5V9.5H10" />
          </svg>
        </WindowButton>
        <WindowButton aria-label="Close">
          <svg width="12" height="12">
            <path d="M0 0L12 12M12 0L0 12" stroke="#000" />
          </svg>
        </WindowButton>
      </TitleBar>
      <MenuBar>
        {menus.map((menu) => (
          <MenuItem key={menu}>{menu}</MenuItem>
        ))}
      </MenuBar>
      <ToolbarRow>
        {toolbars.map((items, idx) => (
          <Toolbar key={idx}>
            <Grip />
            <Tools items={items} />
          </Toolbar>
        ))}
      </ToolbarRow>
      <Workspace>
        <SideColumn>
          <SideToolbar>
            <Grip $wide />
            <Tools items={sideTools} side />
          </SideToolbar>
        </SideColumn>
        <Viewport>
          <Model />
          <Caption>
            <CaptionLine>점 이동(Point Move)</CaptionLine>
            <CaptionLine>끌기(Drag)</CaptionLine>
          </Caption>
          <KeyBadge>&lt;LButtonDown&gt;</KeyBadge>
        </Viewport>
        <Tray>
          <TrayHeader>
            <TrayTitle>기본 트레이</TrayTitle>
            <PinButton aria-label="Pin">
              <svg width="8" height="10" fill="none" stroke="#000">
                <path d="M2.5 0V6M1 0.5H6M5 0V6M6 0V6M0 6.5H8M4 6V10" />
              </svg>
            </PinButton>
            <TrayClose aria-label="Close tray">
              <Cross size={7} color="#fff" width={2} />
            </TrayClose>
          </TrayHeader>
          {panels.map((panel) => (
            <Panel key={panel}>
              <PanelToggle aria-expanded="false">{panel}</PanelToggle>
              <PanelClose aria-label={`${panel} close`}>
                <Cross size={8} width={1.6} />
              </PanelClose>
            </Panel>
          ))}
        </Tray>
      </Workspace>
      <StatusBar>
        <StatusIcons>
          <StatusButton aria-label="Geo-location">
            <svg width="18" height="18" fill="none" stroke="currentColor" strokeWidth="1.5">
              <circle cx="9" cy="9" r="8" />
              <path d="M9 15L6 8A3 3 0 1 1 12 8z" fill="currentColor" stroke="none" />
            </svg>
          </StatusButton>
          <StatusButton aria-label="Credits" $on>
            <svg width="18" height="18" fill="none" stroke="currentColor" strokeWidth="1.8">
              <circle cx="9" cy="9" r="8" />
              <circle cx="9" cy="4.5" r="1.5" fill="currentColor" stroke="none" />
              <path d="M6.5 7H11.5V11H10.5V15H7.5V11H6.5z" fill="currentColor" stroke="none" />
            </svg>
          </StatusButton>
          <StatusButton aria-label="Sign in">
            <svg width="18" height="18" fill="none" stroke="currentColor" strokeWidth="1.5">
              <circle cx="9" cy="9" r="8" />
              <circle cx="9" cy="6.5" r="3" fill="currentColor" stroke="none" />
              <path d="M4 14C4 9 14 9 14 14Q9 18 4 14z" fill="currentColor" stroke="none" />
            </svg>
          </StatusButton>
        </StatusIcons>
        <StatusText>
          이동할 두 점을 선택하십시오. Ctrl = 복사 토글, Alt = 자동 접기 토글, Shift를 누른 채로 선택 = 추정 잠금
        </StatusText>
        <MeasureLabel htmlFor="measure">거리</MeasureLabel>
        <MeasureInput id="measure" defaultValue="~ 917mm" />
      </StatusBar>
    </Window>
  </Screen>
)

export default App
